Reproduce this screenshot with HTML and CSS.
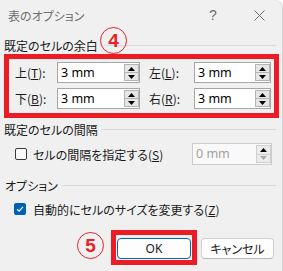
FILE: index.html
```html
<!DOCTYPE html>
<html lang="ja">
<head>
    <meta charset="UTF-8">
    <title>表のオプション</title>
    <link rel="stylesheet" href="styles.css">
</head>
<body>
    <div class="dialog">
        <div class="titlebar">
            <span class="title">表のオプション</span>
            <span class="tb-btn">?</span>
            <span class="tb-btn">
                <svg width="11" height="11" viewBox="0 0 11 11"><path d="M0.5 0.5 L10.5 10.5 M10.5 0.5 L0.5 10.5" stroke="#6e6e6e" stroke-width="1"/></svg>
            </span>
        </div>

        <div class="group-head">
            <span>既定のセルの余白</span>
            <span class="rule"></span>
            <span class="mark mark-4">4</span>
        </div>
        <div class="margins">
            <span class="lbl">上(<u>T</u>):</span>
            <div class="spin">
                <span class="val">3 mm</span>
                <span class="arrows">
                    <span class="arr"><svg width="7" height="4" viewBox="0 0 7 4"><path d="M0 4 L3.5 0 L7 4 Z" fill="#000"/></svg></span>
                    <span class="arr"><svg width="7" height="4" viewBox="0 0 7 4"><path d="M0 0 L7 0 L3.5 4 Z" fill="#000"/></svg></span>
                </span>
            </div>
            <span class="lbl lbl-right">左(<u>L</u>):</span>
            <div class="spin">
                <span class="val">3 mm</span>
                <span class="arrows">
                    <span class="arr"><svg width="7" height="4" viewBox="0 0 7 4"><path d="M0 4 L3.5 0 L7 4 Z" fill="#000"/></svg></span>
                    <span class="arr"><svg width="7" height="4" viewBox="0 0 7 4"><path d="M0 0 L7 0 L3.5 4 Z" fill="#000"/></svg></span>
                </span>
            </div>
            <span class="lbl">下(<u>B</u>):</span>
            <div class="spin">
                <span class="val">3 mm</span>
                <span class="arrows">
                    <span class="arr"><svg width="7" height="4" viewBox="0 0 7 4"><path d="M0 4 L3.5 0 L7 4 Z" fill="#000"/></svg></span>
                    <span class="arr"><svg width="7" height="4" viewBox="0 0 7 4"><path d="M0 0 L7 0 L3.5 4 Z" fill="#000"/></svg></span>
                </span>
            </div>
            <span class="lbl lbl-right">右(<u>R</u>):</span>
            <div class="spin">
                <span class="val">3 mm</span>
                <span class="arrows">
                    <span class="arr"><svg width="7" height="4" viewBox="0 0 7 4"><path d="M0 4 L3.5 0 L7 4 Z" fill="#000"/></svg></span>
                    <span class="arr"><svg width="7" height="4" viewBox="0 0 7 4"><path d="M0 0 L7 0 L3.5 4 Z" fill="#000"/></svg></span>
                </span>
            </div>
        </div>

        <div class="group-head head-2">
            <span>既定のセルの間隔</span>
            <span class="rule"></span>
        </div>
        <div class="spacing-row">
            <span class="cb"></span>
            <span>セルの間隔を指定する(<u>S</u>)</span>
            <div class="spin spin-off">
                <span class="val">0 mm</span>
                <span class="arrows">
                    <span class="arr"><svg width="7" height="4" viewBox="0 0 7 4"><path d="M0 4 L3.5 0 L7 4 Z" fill="#000"/></svg></span>
                    <span class="arr"><svg width="7" height="4" viewBox="0 0 7 4"><path d="M0 0 L7 0 L3.5 4 Z" fill="#a8a8a8"/></svg></span>
                </span>
            </div>
        </div>

        <div class="group-head head-3">
            <span>オプション</span>
            <span class="rule"></span>
        </div>
        <div class="auto-row">
            <span class="cb cb-on">
                <svg width="10" height="10" viewBox="0 0 10 10"><path d="M2 5.2 L4.1 7.2 L8 2.8" fill="none" stroke="#fff" stroke-width="1.2"/></svg>
            </span>
            <span>自動的にセルのサイズを変更する(<u>Z</u>)</span>
        </div>

        <div class="buttons">
            <div class="ok-wrap">
                <span class="mark mark-5">5</span>
                <button class="btn btn-ok">OK</button>
                <span class="ok-frame"></span>
            </div>
            <button class="btn">キャンセル</button>
        </div>
    </div>
</body>
</html>
```

FILE: styles.css
```css
* {
    box-sizing: border-box;
}
body {
    margin: 0;
    background: #fff;
    font-family: "Noto Sans CJK JP", sans-serif;
    font-size: 12px;
    font-feature-settings: "palt" 1;
    color: #1a1a1a;
}
.dialog {
    width: 283px;
    height: 271px;
    background: #f0f0f0;
    border-top-right-radius: 8px;
    border-right: 1px solid #d4d4d4;
}
.titlebar {
    height: 30px;
    display: flex;
    align-items: center;
    padding-left: 8px;
    color: #6e6e6e;
}
.title {
    flex: 1;
}
.tb-btn {
    width: 46px;
    display: flex;
    justify-content: center;
    align-items: center;
    font-size: 14px;
    font-family: "Liberation Sans", sans-serif;
}
.group-head {
    position: relative;
    display: flex;
    align-items: center;
    height: 18px;
    margin-top: 6px;
    padding: 0 6px 0 4px;
}
.rule {
    flex: 1;
    height: 1px;
    background: #dadada;
    margin-left: 4px;
}
.head-2 {
    margin-top: 2px;
}
.head-3 {
    margin-top: 11px;
    padding-left: 5px;
}
.mark {
    position: absolute;
    width: 27px;
    height: 27px;
    border: 1.5px solid #e8202a;
    border-radius: 50%;
    color: #e8202a;
    font-family: "Liberation Sans", sans-serif;
    font-weight: bold;
    font-size: 19px;
    display: flex;
    justify-content: center;
    align-items: center;
}
.mark-4 {
    left: 100px;
    top: -9px;
}
.mark-5 {
    left: -40px;
    top: -6px;
}
.margins {
    margin: 0 3px 0 4px;
    height: 64px;
    border: 5px solid #ec1c24;
    padding: 3px 4px 4px 6px;
    display: grid;
    grid-template-columns: 42px 83px 54px 77px;
    grid-template-rows: 21px 21px;
    row-gap: 5px;
    align-items: center;
}
.lbl-right {
    padding-left: 9px;
}
.spin {
    display: flex;
    height: 21px;
    border: 1px solid #a6a6a6;
    background: #fff;
}
.val {
    flex: 1;
    padding-left: 3px;
    font-family: "Noto Sans", sans-serif;
    font-size: 12.5px;
    line-height: 19px;
    color: #000;
}
.arrows {
    width: 15px;
    margin: 1px 0 1px 0;
    display: flex;
    flex-direction: column;
}
.arr {
    flex: 1;
    display: flex;
    justify-content: center;
    align-items: center;
    border: 1px solid #b4b4b4;
    background: #e6e6e6;
}
.arr + .arr {
    border-top: none;
}
.spacing-row {
    display: flex;
    align-items: center;
    height: 22px;
    margin-top: 5px;
    padding: 0 10px 0 15px;
}
.spacing-row .spin {
    margin-left: auto;
    width: 80px;
    height: 22px;
}
.spin-off {
    border-color: #cccccc;
    background: #f9f9f9;
}
.spin-off .val {
    color: #a0a0a0;
}
.spin-off .arr {
    border-color: #cfcfcf;
    background: #ececec;
}
.cb {
    width: 12px;
    height: 12px;
    border: 1px solid #3c3c3c;
    border-radius: 2px;
    background: #fbfbfb;
    margin-right: 6px;
    display: flex;
    justify-content: center;
    align-items: center;
}
.cb-on {
    background: #005fb8;
    border-color: #005fb8;
    margin-right: 7px;
}
.auto-row {
    display: flex;
    align-items: center;
    height: 20px;
    margin-top: 5px;
    padding-left: 14px;
}
.buttons {
    display: flex;
    justify-content: flex-end;
    gap: 10px;
    margin-top: 19px;
    padding-right: 8px;
}
.ok-wrap {
    position: relative;
}
.btn {
    width: 73px;
    height: 21px;
    padding: 0;
    font-family: "Noto Sans CJK JP", sans-serif;
    font-feature-settings: "palt" 1;
    font-size: 12px;
    color: #1a1a1a;
    background: #fdfdfd;
    border: 1px solid #d0d0d0;
    border-bottom-color: #b8b8b8;
    border-radius: 4px;
}
.btn-ok {
    display: block;
    width: 74px;
    border: 1px solid #0067c0;
    font-family: "Noto Sans", sans-serif;
}
.ok-frame {
    position: absolute;
    top: -8px;
    right: -6px;
    bottom: -6px;
    left: -6px;
    border: 5px solid #ec1c24;
}
```
